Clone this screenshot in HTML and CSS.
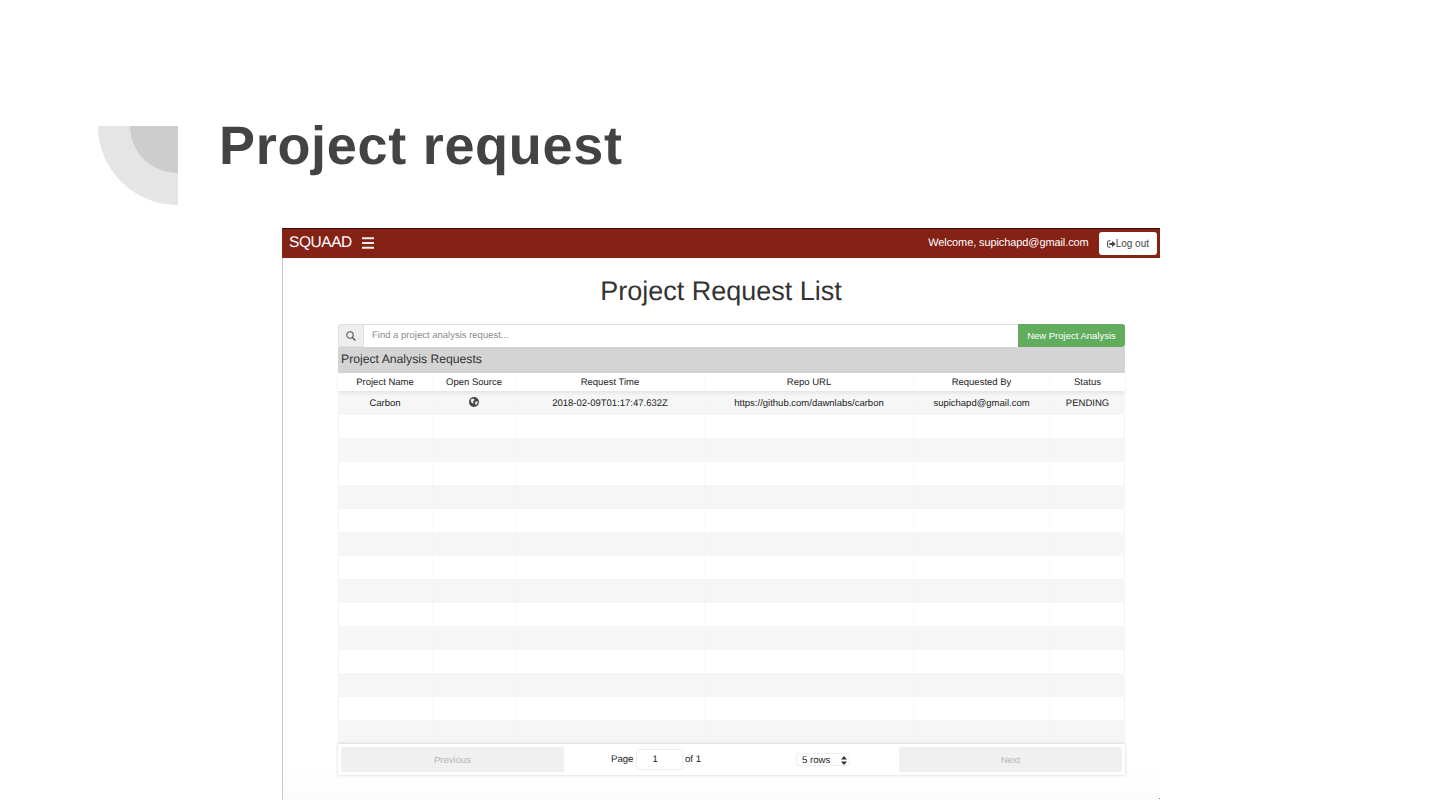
FILE: index.html
```html
<!DOCTYPE html>
<html lang="en">
<head>
    <meta charset="UTF-8">
    <title>Project request</title>
    <link rel="stylesheet" href="styles.css">
</head>
<body>
    <div class="slide">
        <div class="slide-head">
            <svg class="corner" width="80" height="79" viewBox="0 0 80 79">
                <path d="M0 0H80V79C36 79 0 44 0 0Z" fill="#e5e5e5"/>
                <path d="M32 0H80V47C53 47 32 26 32 0Z" fill="#cdcdcd"/>
            </svg>
            <h1 class="slide-title">Project request</h1>
        </div>

        <div class="shot">
            <div class="navbar">
                <span class="brand">SQUAAD</span>
                <svg class="burger" width="12" height="12" viewBox="0 0 12 12">
                    <path d="M0 1.2H12M0 6H12M0 10.8H12" stroke="#f6eeec" stroke-width="2"/>
                </svg>
                <span class="welcome">Welcome, supichapd@gmail.com</span>
                <button class="logout">
                    <svg width="9" height="8" viewBox="0 0 9 8">
                        <path d="M3.5 .8H1.5Q.6 .8 .6 1.7V6.3Q.6 7.2 1.5 7.2H3.5" fill="none" stroke="#444" stroke-width="1"/>
                        <path d="M2.4 3H5V1L8.8 4 5 7V5H2.4Z" fill="#444"/>
                    </svg>Log out
                </button>
            </div>

            <h2 class="page-title">Project Request List</h2>

            <div class="panel">
                <div class="search">
                    <span class="search-icon">
                        <svg width="10" height="10" viewBox="0 0 10 10">
                            <circle cx="4" cy="4" r="3.2" fill="none" stroke="#555" stroke-width="1.1"/>
                            <path d="M6.4 6.4L9.4 9.4" stroke="#555" stroke-width="1.4"/>
                        </svg>
                    </span>
                    <span class="search-input">Find a project analysis request...</span>
                    <button class="new-btn">New Project Analysis</button>
                </div>
                <div class="panel-heading">Project Analysis Requests</div>

                <div class="row head-row">
                    <div>Project Name</div>
                    <div>Open Source</div>
                    <div>Request Time</div>
                    <div>Repo URL</div>
                    <div>Requested By</div>
                    <div>Status</div>
                </div>

                <div class="rows">
                    <div class="row">
                        <div>Carbon</div>
                        <div>
                            <svg class="globe" width="10" height="10" viewBox="0 0 10 10">
                                <circle cx="5" cy="5" r="5" fill="#444"/>
                                <path d="M2 2.2L4.6 1.4 5.6 3 4 4.4 4.6 6 3.2 6.6 1.8 4.4ZM6.6 4.6L8.8 4.2 8.4 6.6 6.8 8.2 6 6.2Z" fill="#eee"/>
                            </svg>
                        </div>
                        <div>2018-02-09T01:17:47.632Z</div>
                        <div>https://github.com/dawnlabs/carbon</div>
                        <div>supichapd@gmail.com</div>
                        <div>PENDING</div>
                    </div>
                    <div class="row"><div></div><div></div><div></div><div></div><div></div><div></div></div>
                    <div class="row"><div></div><div></div><div></div><div></div><div></div><div></div></div>
                    <div class="row"><div></div><div></div><div></div><div></div><div></div><div></div></div>
                    <div class="row"><div></div><div></div><div></div><div></div><div></div><div></div></div>
                    <div class="row"><div></div><div></div><div></div><div></div><div></div><div></div></div>
                    <div class="row"><div></div><div></div><div></div><div></div><div></div><div></div></div>
                    <div class="row"><div></div><div></div><div></div><div></div><div></div><div></div></div>
                    <div class="row"><div></div><div></div><div></div><div></div><div></div><div></div></div>
                    <div class="row"><div></div><div></div><div></div><div></div><div></div><div></div></div>
                    <div class="row"><div></div><div></div><div></div><div></div><div></div><div></div></div>
                    <div class="row"><div></div><div></div><div></div><div></div><div></div><div></div></div>
                    <div class="row"><div></div><div></div><div></div><div></div><div></div><div></div></div>
                    <div class="row"><div></div><div></div><div></div><div></div><div></div><div></div></div>
                    <div class="row"><div></div><div></div><div></div><div></div><div></div><div></div></div>
                </div>

                <div class="pager">
                    <button class="pager-btn">Previous</button>
                    <div class="pager-mid">
                        <span class="page-info"><span>Page</span><span class="page-box">1</span><span>of 1</span></span>
                        <span class="rows-select">5 rows
                            <svg width="6" height="9" viewBox="0 0 6 9">
                                <path d="M3 0L6 3.5H0ZM3 9L0 5.5H6Z" fill="#333"/>
                            </svg>
                        </span>
                    </div>
                    <button class="pager-btn">Next</button>
                </div>
            </div>
        </div>
    </div>
</body>
</html>
```

FILE: styles.css
```css
html, body {
    margin: 0;
    background-color: #ffffff;
}

body {
    font-family: "Liberation Sans", Arial, sans-serif;
    color: #333333;
    text-rendering: geometricPrecision;
}

.slide {
    width: 1440px;
    height: 810px;
    overflow: hidden;
    box-sizing: border-box;
    padding-top: 126px;
}

.slide-head {
    display: flex;
    align-items: flex-start;
    height: 102px;
    padding-left: 98px;
}

.slide-title {
    margin: -10px 0 0 41px;
    font-size: 54px;
    line-height: 61px;
    font-weight: 700;
    letter-spacing: 0.7px;
    color: #434343;
}

.shot {
    position: relative;
    width: 878px;
    height: 572px;
    margin-left: 282px;
    background-color: #ffffff;
    background-image: linear-gradient(#ffffff 540px, #fcfcfc 570px);
    box-shadow: inset 1px 0 0 #c9c9c9;
}

/* stray pixel at the corner of the captured window */
.shot::after {
    content: "";
    position: absolute;
    right: 0;
    bottom: 1px;
    width: 1px;
    height: 1px;
    background-color: #777777;
}

.navbar {
    display: flex;
    align-items: center;
    height: 30px;
    box-sizing: border-box;
    padding: 0 3px 0 7px;
    background-color: #842216;
    border-top: 1px solid #3c0f0a;
    color: #ffffff;
}

.brand {
    margin-bottom: 2px;
    font-size: 15.5px;
    letter-spacing: -0.45px;
}

.burger {
    margin: 0 0 2px 10px;
}

.welcome {
    margin: 0 0 2px auto;
    font-size: 11px;
    letter-spacing: -0.1px;
}

.logout {
    display: flex;
    align-items: center;
    height: 23px;
    margin-left: 10px;
    padding: 0 8px;
    border: none;
    border-radius: 3px;
    background-color: #ffffff;
    font-family: inherit;
    font-size: 10px;
    color: #444444;
}

.page-title {
    margin: 17px 0 0;
    font-size: 27px;
    line-height: 33px;
    font-weight: 400;
    text-align: center;
    color: #333333;
}

.panel {
    width: 787px;
    margin: 16px 0 0 56px;
    background-color: #ffffff;
}

.search {
    display: flex;
    height: 23px;
    font-size: 9.5px;
}

.search-icon {
    display: flex;
    align-items: center;
    justify-content: center;
    width: 26px;
    box-sizing: border-box;
    background-color: #eeeeee;
    border: 1px solid #e0e0e0;
    border-radius: 3px 0 0 3px;
}

.search-input {
    flex: 1;
    display: flex;
    align-items: center;
    padding: 0 0 1px 8px;
    background-color: #ffffff;
    border-top: 1px solid #dcdcdc;
    color: #8c8c8c;
}

.new-btn {
    width: 107px;
    padding: 0 0 1px;
    border: none;
    border-radius: 0 3px 3px 0;
    background-color: #62ad5d;
    font-family: inherit;
    font-size: 9.5px;
    color: #ffffff;
}

.panel-heading {
    height: 26px;
    padding-left: 3px;
    background-color: #d4d4d4;
    font-size: 12.2px;
    line-height: 25px;
    color: #333333;
}

.row {
    display: grid;
    grid-template-columns: 95px 83px 189px 209px 136px 75px;
    align-items: stretch;
    font-size: 9.5px;
    color: #222222;
}

.row > div {
    display: flex;
    align-items: center;
    justify-content: center;
    box-sizing: border-box;
    padding-top: 1px;
    border-right: 1px solid #fafafa;
}

.row > div:last-child {
    border-right: none;
}

.head-row {
    position: relative;
    height: 18px;
    background-color: #ffffff;
    box-shadow: 0 2px 4px rgba(0, 0, 0, 0.08);
}

.rows {
    display: grid;
    grid-template-rows: repeat(15, 1fr);
    height: 353px;
    box-shadow: inset 1px 0 0 #f3f3f3, inset -1px 0 0 #f3f3f3;
}

.rows .row:nth-child(odd) {
    background-color: #f6f6f6;
}

.rows .row:nth-child(odd) > div {
    border-right-color: #f4f4f4;
}

.globe {
    margin-bottom: 3px;
}

.pager {
    position: relative;
    display: flex;
    align-items: center;
    height: 31px;
    box-sizing: border-box;
    padding: 3px;
    background-color: #ffffff;
    box-shadow: 0 0 3px rgba(0, 0, 0, 0.2);
}

.pager-btn {
    width: 223px;
    height: 25px;
    padding: 0;
    border: none;
    border-radius: 2px;
    background-color: #f0f0f0;
    font-family: inherit;
    font-size: 9.5px;
    color: #b5b5b5;
}

.pager-mid {
    flex: 1;
    display: flex;
    align-items: center;
    font-size: 9.6px;
    color: #222222;
    white-space: nowrap;
}

.page-info {
    display: flex;
    align-items: center;
    width: 90px;
    margin-left: 47px;
}

.page-box {
    width: 47px;
    height: 21px;
    margin: 0 2px 0 3px;
    padding-right: 9px;
    box-sizing: border-box;
    border: 1px solid #eeeeee;
    border-radius: 3px;
    line-height: 19px;
    text-align: center;
}

.rows-select {
    display: flex;
    align-items: center;
    justify-content: space-between;
    width: 54px;
    height: 13px;
    margin-left: 95px;
    padding: 1px 2px 0 5px;
    box-sizing: border-box;
    border: 1px solid #eeeeee;
    border-radius: 2px;
}
```
